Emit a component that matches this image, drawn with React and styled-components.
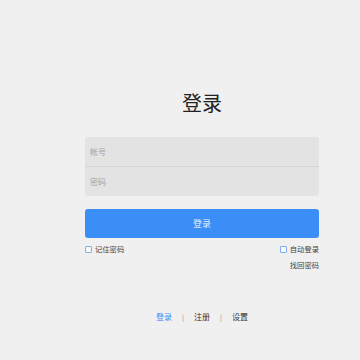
import React from "react";
import styled, { createGlobalStyle } from "styled-components";

const GlobalStyle = createGlobalStyle`
  html, body {
    margin: 0;
    padding: 0;
    background: #f0f0f0;
    font-family: "Noto Sans CJK SC", "Noto Sans", sans-serif;
  }
`;

const Page = styled.div`
  width: 360px;
  height: 360px;
  box-sizing: border-box;
  padding: 88px 41px 0 85px;
  display: flex;
  flex-direction: column;
`;

const Title = styled.h1`
  margin: 0;
  text-align: center;
  font-size: 20px;
  font-weight: normal;
  line-height: 30px;
  color: #222;
`;

const Fields = styled.div`
  margin-top: 19px;
  background: #e3e3e3;
  border-radius: 3px;
  display: flex;
  flex-direction: column;
`;

const Field = styled.input`
  height: 29px;
  border: none;
  border-top: ${(p) => (p.$divided ? "1px solid #d4d4d4" : "none")};
  background: transparent;
  padding: 0 5px;
  font-family: inherit;
  font-size: 8px;
  outline: none;
  &::placeholder {
    color: #a4a4a4;
  }
`;

const Button = styled.button`
  margin-top: 13px;
  height: 29px;
  border: none;
  border-radius: 3px;
  background: #3a8ef5;
  color: #e8f1fd;
  font-family: inherit;
  font-size: 9px;
`;

const Options = styled.div`
  margin-top: 6px;
  display: flex;
  justify-content: space-between;
  align-items: center;
`;

const Check = styled.label`
  display: flex;
  align-items: center;
  gap: 3px;
  font-size: 7.3px;
  color: #444;
`;

const Box = styled.span`
  width: 5px;
  height: 5px;
  border: 1px solid #7fb0ec;
  border-radius: 1px;
  background: #fafafa;
`;

const Forgot = styled.div`
  margin-top: 6px;
  text-align: right;
  font-size: 7.3px;
  color: #444;
`;

const Footer = styled.div`
  margin-top: 41px;
  display: flex;
  justify-content: center;
  align-items: center;
  gap: 10px;
  font-size: 8px;
`;

const Link = styled.span`
  color: ${(p) => (p.$active ? "#3a8ef5" : "#333")};
`;

const Sep = styled.span`
  color: #888;
  font-size: 7px;
`;

export default function App() {
  return (
    <>
      <GlobalStyle />
      <Page>
        <Title>登录</Title>
        <Fields>
          <Field placeholder="帐号" />
          <Field $divided placeholder="密码" type="password" />
        </Fields>
        <Button>登录</Button>
        <Options>
          <Check>
            <Box />
            记住密码
          </Check>
          <Check>
            <Box />
            自动登录
          </Check>
        </Options>
        <Forgot>找回密码</Forgot>
        <Footer>
          <Link $active>登录</Link>
          <Sep>|</Sep>
          <Link>注册</Link>
          <Sep>|</Sep>
          <Link>设置</Link>
        </Footer>
      </Page>
    </>
  );
}
